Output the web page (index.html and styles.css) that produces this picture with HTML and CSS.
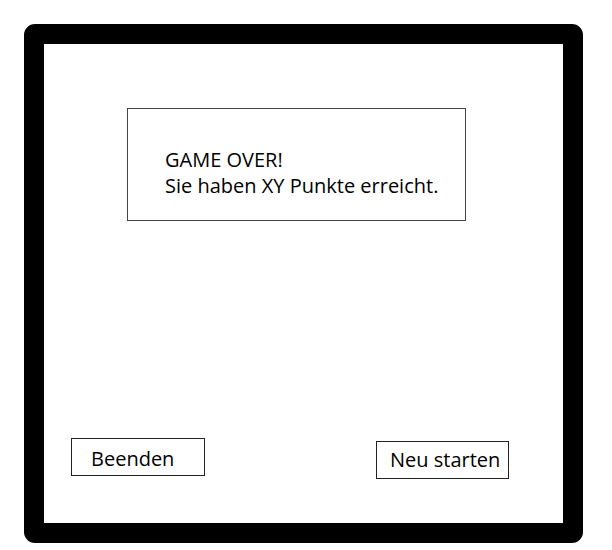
FILE: index.html
```html
<html>
<head>
<link rel="stylesheet" href="styles.css">
</head>
<body>
<div class="screen">
  <div class="messageBox">
    <p>GAME OVER!</p>
    <p>Sie haben XY Punkte erreicht.</p>
  </div>
  <div class="buttonRow">
    <button class="btn btnQuit">Beenden</button>
    <button class="btn btnRestart">Neu starten</button>
  </div>
</div>
</body>
</html>
```

FILE: styles.css
```css
body {
  margin: 0;
  padding: 24px 0 0 24px;
  background-color: white;
  font-family: "Open Sans", "Noto Sans", sans-serif;
  color: #000;
}

.screen {
  box-sizing: border-box;
  width: 559px;
  height: 519px;
  border: 20px solid black;
  border-radius: 11px;
  display: flex;
  flex-direction: column;
  padding: 64px 54px 44px 27px;
}

.messageBox {
  box-sizing: border-box;
  width: 339px;
  height: 113px;
  margin-left: 56px;
  border: 1px solid #444;
  padding: 38px 0 0 37px;
  font-size: 20px;
  line-height: 26px;
}

.messageBox p {
  margin: 0;
}

.buttonRow {
  margin-top: auto;
  display: flex;
  justify-content: space-between;
  align-items: flex-start;
}

.btn {
  box-sizing: border-box;
  background-color: white;
  border: 1px solid #222;
  font-family: inherit;
  font-size: 20px;
  color: #000;
  text-align: left;
  margin: 0;
  height: 38px;
  padding: 0 0 0 13px;
}

.btnQuit {
  width: 134px;
  padding-left: 19px;
  padding-top: 2px;
}

.btnRestart {
  width: 133px;
  margin-top: 3px;
  padding-bottom: 2px;
}
```
